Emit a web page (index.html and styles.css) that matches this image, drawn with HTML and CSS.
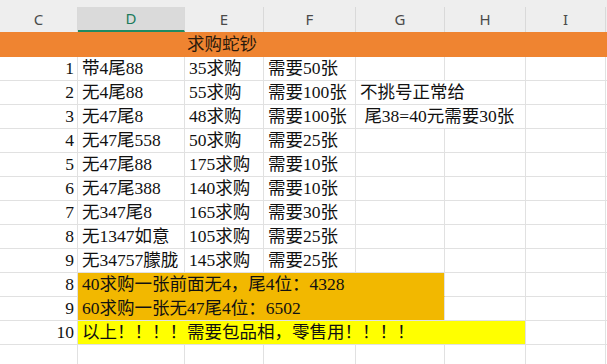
FILE: index.html
```html
<!DOCTYPE html>
<html lang="zh">
<head>
<meta charset="utf-8">
<title>求购蛇钞</title>
<link rel="stylesheet" href="styles.css">
</head>
<body>
<div class="sheet">
  <div class="heads">
    <div class="h">C</div>
    <div class="h sel">D</div>
    <div class="h">E</div>
    <div class="h">F</div>
    <div class="h">G</div>
    <div class="h">H</div>
    <div class="h">I</div>
    <div class="h end"></div>
  </div>
  <div class="grid">
    <div class="c orange n"></div>
    <div class="c orange span7 title">求购蛇钞</div>

    <div class="c n">1</div><div class="c">带4尾88</div><div class="c">35求购</div><div class="c">需要50张</div><div class="c"></div><div class="c"></div><div class="c"></div><div class="c e"></div>
    <div class="c n">2</div><div class="c">无4尾88</div><div class="c">55求购</div><div class="c">需要100张</div><div class="c span2 pre">不挑号正常给</div><div class="c"></div><div class="c e"></div>
    <div class="c n">3</div><div class="c">无47尾8</div><div class="c">48求购</div><div class="c">需要100张</div><div class="c span2 pre"> 尾38=40元需要30张</div><div class="c"></div><div class="c e"></div>
    <div class="c n">4</div><div class="c">无47尾558</div><div class="c">50求购</div><div class="c">需要25张</div><div class="c"></div><div class="c"></div><div class="c"></div><div class="c e"></div>
    <div class="c n">5</div><div class="c">无47尾88</div><div class="c">175求购</div><div class="c">需要10张</div><div class="c"></div><div class="c"></div><div class="c"></div><div class="c e"></div>
    <div class="c n">6</div><div class="c">无47尾388</div><div class="c">140求购</div><div class="c">需要10张</div><div class="c"></div><div class="c"></div><div class="c"></div><div class="c e"></div>
    <div class="c n">7</div><div class="c">无347尾8</div><div class="c">165求购</div><div class="c">需要30张</div><div class="c"></div><div class="c"></div><div class="c"></div><div class="c e"></div>
    <div class="c n">8</div><div class="c">无1347如意</div><div class="c">105求购</div><div class="c">需要25张</div><div class="c"></div><div class="c"></div><div class="c"></div><div class="c e"></div>
    <div class="c n">9</div><div class="c">无34757朦胧</div><div class="c">145求购</div><div class="c">需要25张</div><div class="c"></div><div class="c"></div><div class="c"></div><div class="c e"></div>

    <div class="c n">8</div><div class="c span4 gold gold-top">40求购一张前面无4，尾4位：4328</div><div class="c"></div><div class="c"></div><div class="c e"></div>
    <div class="c n">9</div><div class="c span4 gold">60求购一张无47尾4位：6502</div><div class="c"></div><div class="c"></div><div class="c e"></div>
    <div class="c n">10</div><div class="c span5 yellow">以上！！！！需要包品相，零售用！！！！</div><div class="c"></div><div class="c e"></div>

    <div class="c n"></div><div class="c"></div><div class="c"></div><div class="c"></div><div class="c"></div><div class="c"></div><div class="c"></div><div class="c e"></div>
  </div>
</div>
</body>
</html>
```

FILE: styles.css
```css
html, body {
  margin: 0;
  padding: 0;
  background: #ffffff;
}

.sheet {
  width: 607px;
  height: 364px;
  overflow: hidden;
}

.heads {
  display: grid;
  grid-template-columns: 78px 107px 79px 92px 89px 81px 80px 1px;
  padding-top: 7px;
  background: #eeeeee;
  height: 25px;
  box-sizing: content-box;
}

.h {
  box-sizing: border-box;
  height: 25px;
  border-right: 1px solid #d9d9d9;
  font-family: "Noto Sans", "Open Sans", sans-serif;
  font-size: 15px;
  line-height: 24px;
  color: #4a4a4a;
  text-align: center;
}

.h.sel {
  background: #dadada;
  color: #1c7a5c;
  border-bottom: 2px solid #1f8a62;
  line-height: 23px;
}

.h.end {
  border-right: none;
}

.grid {
  display: grid;
  grid-template-columns: 78px 107px 79px 92px 89px 81px 80px 1px;
  grid-auto-rows: 24px;
  grid-template-rows: 25px;
}

.c {
  box-sizing: border-box;
  border-right: 1px solid #e1e1e1;
  border-bottom: 1px solid #e1e1e1;
  font-family: "Liberation Serif", "Noto Sans CJK SC", serif;
  font-size: 17.5px;
  line-height: 23px;
  color: #111111;
  padding-left: 4px;
  white-space: nowrap;
  overflow: visible;
}

.c.e {
  border-right: none;
}

.c.n {
  text-align: right;
  padding-left: 0;
  padding-right: 3px;
}

.pre {
  white-space: pre;
}

.span2 { grid-column: span 2; }
.span4 { grid-column: span 4; }
.span5 { grid-column: span 5; }
.span7 { grid-column: span 7; }

.orange {
  background: #ef8431;
  border-right-color: #ef8431;
  border-bottom: none;
  line-height: 25px;
  color: #2a1a0c;
}

.title {
  padding-left: 109px;
}

.gold {
  background: #f2b800;
}

.gold-top {
  border-bottom-color: #f2b800;
}

.yellow {
  background: #ffff00;
}
```
